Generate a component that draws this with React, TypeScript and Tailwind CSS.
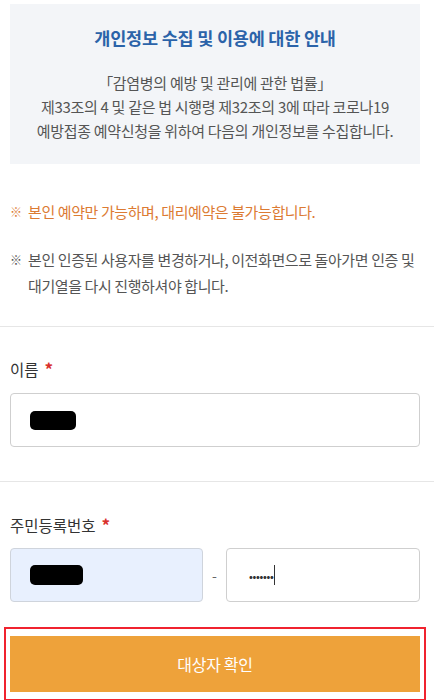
export default function App() {
  return (
    <div
      className="w-[434px] h-[700px] bg-white overflow-hidden"
      style={{ fontFamily: '"Noto Sans CJK KR", "Noto Sans", sans-serif' }}
    >
      <div className="pt-[4px] pl-[10px] pr-[14px]">
        <div className="h-[160px] bg-[#f3f5f8] flex flex-col items-center pt-[22px]">
          <h1 className="text-[17.5px] leading-[24px] font-bold text-[#2b63a9] tracking-[-0.2px]">
            개인정보 수집 및 이용에 대한 안내
          </h1>
          <p className="mt-[21px] text-[15px] leading-[24px] text-[#555] text-center tracking-[-0.3px]">
            「감염병의 예방 및 관리에 관한 법률」
            <br />
            제33조의 4 및 같은 법 시행령 제32조의 3에 따라 코로나19
            <br />
            예방접종 예약신청을 위하여 다음의 개인정보를 수집합니다.
          </p>
        </div>
      </div>

      <div className="pl-[10px] pr-[14px] pt-[35px] text-[15px] leading-[26px] tracking-[-0.4px]">
        <div className="flex text-[#dc7b33]">
          <span className="w-[18px] shrink-0 text-[12px]">※</span>
          <span>본인 예약만 가능하며, 대리예약은 불가능합니다.</span>
        </div>
        <div className="flex mt-[22px] text-[#555]">
          <span className="w-[18px] shrink-0 text-[12px]">※</span>
          <span>
            본인 인증된 사용자를 변경하거나, 이전화면으로 돌아가면 인증 및
            <br />
            대기열을 다시 진행하셔야 합니다.
          </span>
        </div>
      </div>

      <div className="mt-[27px] border-t border-[#e6e6e6]" />

      <div className="pl-[10px] pr-[14px] pt-[31px] pb-[34px]">
        <div className="text-[15.5px] leading-[22px] text-[#333] flex items-start gap-[6px]">
          이름 <span className="text-[#d9302c] text-[17px] font-bold leading-[22px]">*</span>
        </div>
        <div className="mt-[13px] h-[54px] border border-[#cfcfcf] rounded-[4px] flex items-center pl-[19px]">
          <span className="w-[46px] h-[19px] bg-black rounded-[5px]" />
        </div>
      </div>

      <div className="border-t border-[#e6e6e6]" />

      <div className="pl-[10px] pr-[14px] pt-[32px]">
        <div className="text-[15.5px] leading-[22px] text-[#333] flex items-start gap-[6px]">
          주민등록번호 <span className="text-[#d9302c] text-[17px] font-bold leading-[22px]">*</span>
        </div>
        <div className="mt-[12px] flex items-center">
          <div className="w-[193px] h-[54px] bg-[#e8f0fe] border border-[#cfd4dc] rounded-[4px] flex items-center pl-[19px]">
            <span className="w-[53px] h-[20px] bg-black rounded-[5px]" />
          </div>
          <div className="flex-1 text-center text-[#666] text-[14px]">-</div>
          <div className="w-[194px] h-[54px] border border-[#cfcfcf] rounded-[4px] flex items-center pl-[22px]">
            <span className="text-[#333] text-[10px] tracking-[-0.3px] font-bold">•••••••</span>
            <span className="ml-[1px] w-[1px] h-[20px] bg-[#333]" />
          </div>
        </div>
      </div>

      <div className="ml-[4px] mr-[8px] mt-[25px] border-[2px] border-[#f0232f] px-[4px] py-[7px]">
        <button className="w-full h-[56px] bg-[#eea23a] text-white text-[16px] tracking-[-0.3px]">
          대상자 확인
        </button>
      </div>
    </div>
  );
}
